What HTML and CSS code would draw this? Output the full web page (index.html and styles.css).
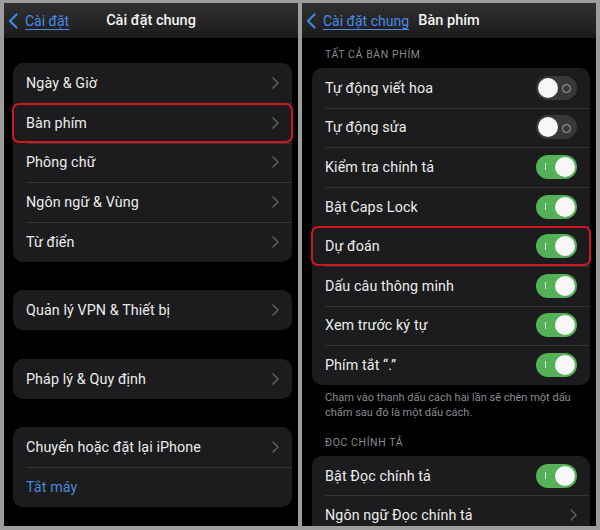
FILE: index.html
```html
<!DOCTYPE html>
<html lang="vi">
<head>
<meta charset="utf-8">
<title>Cài đặt</title>
<link rel="stylesheet" href="styles.css">
</head>
<body>
<div class="frame">
  <section class="panel">
    <header class="nav">
      <a class="back"><svg class="back-chev" viewBox="0 0 10 16" width="10" height="16"><path d="M8.5 1.5 L2 8 L8.5 14.5" fill="none" stroke="currentColor" stroke-width="2.2" stroke-linecap="round" stroke-linejoin="round"/></svg><span class="back-text">Cài đặt</span></a>
      <h1 class="title">Cài đặt chung</h1>
    </header>
    <div class="content left">
      <div class="card">
        <div class="row"><span class="label">Ngày &amp; Giờ</span><svg class="chev" viewBox="0 0 7 12" width="7" height="12"><path d="M1 1 L6 6 L1 11" fill="none" stroke="currentColor" stroke-width="1.6" stroke-linecap="round" stroke-linejoin="round"/></svg></div>
        <div class="row mark"><span class="label">Bàn phím</span><svg class="chev" viewBox="0 0 7 12" width="7" height="12"><path d="M1 1 L6 6 L1 11" fill="none" stroke="currentColor" stroke-width="1.6" stroke-linecap="round" stroke-linejoin="round"/></svg></div>
        <div class="row"><span class="label">Phông chữ</span><svg class="chev" viewBox="0 0 7 12" width="7" height="12"><path d="M1 1 L6 6 L1 11" fill="none" stroke="currentColor" stroke-width="1.6" stroke-linecap="round" stroke-linejoin="round"/></svg></div>
        <div class="row"><span class="label">Ngôn ngữ &amp; Vùng</span><svg class="chev" viewBox="0 0 7 12" width="7" height="12"><path d="M1 1 L6 6 L1 11" fill="none" stroke="currentColor" stroke-width="1.6" stroke-linecap="round" stroke-linejoin="round"/></svg></div>
        <div class="row"><span class="label">Từ điển</span><svg class="chev" viewBox="0 0 7 12" width="7" height="12"><path d="M1 1 L6 6 L1 11" fill="none" stroke="currentColor" stroke-width="1.6" stroke-linecap="round" stroke-linejoin="round"/></svg></div>
      </div>
      <div class="card">
        <div class="row"><span class="label">Quản lý VPN &amp; Thiết bị</span><svg class="chev" viewBox="0 0 7 12" width="7" height="12"><path d="M1 1 L6 6 L1 11" fill="none" stroke="currentColor" stroke-width="1.6" stroke-linecap="round" stroke-linejoin="round"/></svg></div>
      </div>
      <div class="card">
        <div class="row"><span class="label">Pháp lý &amp; Quy định</span><svg class="chev" viewBox="0 0 7 12" width="7" height="12"><path d="M1 1 L6 6 L1 11" fill="none" stroke="currentColor" stroke-width="1.6" stroke-linecap="round" stroke-linejoin="round"/></svg></div>
      </div>
      <div class="card">
        <div class="row"><span class="label">Chuyển hoặc đặt lại iPhone</span><svg class="chev" viewBox="0 0 7 12" width="7" height="12"><path d="M1 1 L6 6 L1 11" fill="none" stroke="currentColor" stroke-width="1.6" stroke-linecap="round" stroke-linejoin="round"/></svg></div>
        <div class="row"><span class="label link">Tắt máy</span></div>
      </div>
    </div>
  </section>

  <section class="panel">
    <header class="nav">
      <a class="back"><svg class="back-chev" viewBox="0 0 10 16" width="10" height="16"><path d="M8.5 1.5 L2 8 L8.5 14.5" fill="none" stroke="currentColor" stroke-width="2.2" stroke-linecap="round" stroke-linejoin="round"/></svg><span class="back-text">Cài đặt chung</span></a>
      <h1 class="title">Bàn phím</h1>
    </header>
    <div class="content right">
      <div class="section-label">TẤT CẢ BÀN PHÍM</div>
      <div class="card">
        <div class="row r"><span class="label">Tự động viết hoa</span><span class="toggle off"><span class="knob"></span></span></div>
        <div class="row r"><span class="label">Tự động sửa</span><span class="toggle off"><span class="knob"></span></span></div>
        <div class="row r"><span class="label">Kiểm tra chính tả</span><span class="toggle on"><span class="knob"></span></span></div>
        <div class="row r"><span class="label">Bật Caps Lock</span><span class="toggle on"><span class="knob"></span></span></div>
        <div class="row r mark"><span class="label">Dự đoán</span><span class="toggle on"><span class="knob"></span></span></div>
        <div class="row r"><span class="label">Dấu câu thông minh</span><span class="toggle on"><span class="knob"></span></span></div>
        <div class="row r"><span class="label">Xem trước ký tự</span><span class="toggle on"><span class="knob"></span></span></div>
        <div class="row r"><span class="label">Phím tắt “.”</span><span class="toggle on"><span class="knob"></span></span></div>
      </div>
      <p class="footnote">Chạm vào thanh dấu cách hai lần sẽ chèn một dấu<br>chấm sau đó là một dấu cách.</p>
      <div class="section-label second">ĐỌC CHÍNH TẢ</div>
      <div class="card">
        <div class="row r"><span class="label">Bật Đọc chính tả</span><span class="toggle on"><span class="knob"></span></span></div>
        <div class="row r"><span class="label">Ngôn ngữ Đọc chính tả</span><svg class="chev" viewBox="0 0 7 12" width="7" height="12"><path d="M1 1 L6 6 L1 11" fill="none" stroke="currentColor" stroke-width="1.6" stroke-linecap="round" stroke-linejoin="round"/></svg></div>
      </div>
    </div>
  </section>
</div>
</body>
</html>
```

FILE: styles.css
```css
* { box-sizing: border-box; }
html, body { margin: 0; padding: 0; }
body {
  width: 600px;
  height: 530px;
  background: #9d9d9d;
  font-family: "Roboto", "Liberation Sans", sans-serif;
  overflow: hidden;
}
.frame {
  display: flex;
  gap: 4px;
  padding: 3px 4px 4px 4px;
  height: 530px;
}
.panel {
  width: 294px;
  height: 523px;
  background: #000;
  overflow: hidden;
  display: flex;
  flex-direction: column;
}
.nav {
  position: relative;
  height: 35px;
  flex: none;
  background: linear-gradient(180deg, #2f2f2f 0%, #262626 50%, #1b1b1b 100%);
  display: flex;
  align-items: center;
  justify-content: center;
}
.back {
  position: absolute;
  left: 4px;
  top: 0;
  height: 35px;
  display: flex;
  align-items: center;
  gap: 7px;
  color: #3f86e6;
}
.back-chev { display: block; margin-top: 1px; }
.back-text {
  font-size: 14px;
  text-decoration: underline;
  text-decoration-thickness: 1px;
  text-underline-offset: 3px;
  color: #4a8ae4;
}
.title {
  margin: 0;
  font-size: 14.5px;
  font-weight: 500;
  color: #f2f2f2;
}
.content { display: flex; flex-direction: column; }
.content.left { padding: 25px 6px 0 9px; gap: 28.5px; }
.content.right { padding: 0 6px 0 10px; }
.card {
  background: #1c1c1e;
  border-radius: 10px;
}
.row {
  position: relative;
  height: 39.8px;
  display: flex;
  align-items: center;
  justify-content: space-between;
  padding: 0 13px 0 13px;
}
.row.r { height: 39.6px; padding: 0 13px 0 13px; }
.row + .row::before {
  content: "";
  position: absolute;
  left: 13px;
  right: 0;
  top: 0;
  height: 1px;
  background: #333335;
}
.row.mark::after {
  content: "";
  position: absolute;
  left: -1px;
  right: -1px;
  top: 0;
  bottom: 0;
  border: 2px solid #d3171c;
  border-radius: 7px;
}
.label {
  font-size: 14.3px;
  color: #ececec;
  letter-spacing: 0.1px;
}
.label.link { color: #4a86d6; }
.chev { color: #5c5c60; display: block; margin-right: 0; }
.section-label {
  font-size: 10.5px;
  line-height: 13px;
  color: #8a8a8f;
  padding: 10px 0 7px 13px;
  letter-spacing: 0.6px;
}
.section-label.second { padding: 16px 0 6.5px 13px; }
.footnote {
  margin: 0;
  padding: 5.5px 0 0 13px;
  font-size: 11px;
  line-height: 15px;
  color: #8a8a8f;
}
.toggle {
  position: relative;
  width: 41px;
  height: 24px;
  border-radius: 12px;
  flex: none;
}
.toggle.on { background: #55b158; }
.toggle.off { background: #38383a; }
.knob {
  position: absolute;
  top: 2px;
  width: 20px;
  height: 20px;
  border-radius: 50%;
  background: #f7f7f7;
}
.toggle.on .knob { right: 2px; }
.toggle.off .knob { left: 2px; }
.toggle.on::before {
  content: "";
  position: absolute;
  left: 9px;
  top: 8.5px;
  width: 1px;
  height: 7px;
  background: rgba(255,255,255,0.75);
}
.toggle.off::before {
  content: "";
  position: absolute;
  right: 6px;
  top: 8.5px;
  width: 7px;
  height: 7px;
  border: 1px solid #a8a8ab;
  border-radius: 50%;
}
```
